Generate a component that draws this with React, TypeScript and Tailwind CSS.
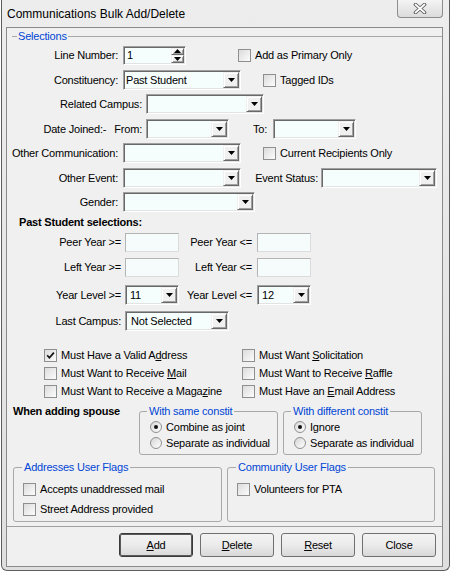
import React from "react";

const sunken =
  "border border-t-[#a0a0a0] border-l-[#a0a0a0] border-b-white border-r-white shadow-[inset_1px_1px_0_#696969,inset_-1px_-1px_0_#e3e3e3]";
const raised =
  "border border-t-[#f0f0f0] border-l-[#f0f0f0] border-b-[#696969] border-r-[#696969] shadow-[inset_1px_1px_0_#ffffff,inset_-1px_-1px_0_#a0a0a0] bg-[#f0f0f0]";

function DropButton() {
  return (
    <div className={`w-[16px] h-full shrink-0 flex items-center justify-center ${raised}`}>
      <svg width="7" height="4" viewBox="0 0 7 4">
        <polygon points="0,0 7,0 3.5,4" fill="#000" />
      </svg>
    </div>
  );
}

function Combo({ className, value, pad = "pl-[1px]" }: { className: string; value?: string; pad?: string }) {
  return (
    <div className={`flex h-[20px] p-[1px] bg-[#f5fdfd] shrink-0 ${sunken} ${className}`}>
      <div className={`flex-1 flex items-center overflow-hidden whitespace-nowrap ${pad}`}>{value}</div>
      <DropButton />
    </div>
  );
}

function TextBox({ className }: { className: string }) {
  return (
    <div
      className={`h-[19px] shrink-0 bg-[#f6fcfc] border border-[#b4b4b4] border-b-[#dcdcdc] border-r-[#dcdcdc] ${className}`}
    />
  );
}

function Spin() {
  return (
    <div className={`ml-[5px] w-[63px] h-[19px] flex p-[1px] bg-[#f5fdfd] shrink-0 ${sunken}`}>
      <div className="flex-1 flex items-center pl-[2px]">1</div>
      <div className="w-[13px] flex flex-col">
        <div className={`flex-1 flex items-center justify-center ${raised}`}>
          <svg width="7" height="4" viewBox="0 0 7 4">
            <polygon points="0,4 7,4 3.5,0" fill="#000" />
          </svg>
        </div>
        <div className={`flex-1 flex items-center justify-center ${raised}`}>
          <svg width="7" height="4" viewBox="0 0 7 4">
            <polygon points="0,0 7,0 3.5,4" fill="#000" />
          </svg>
        </div>
      </div>
    </div>
  );
}

function Box({ checked }: { checked?: boolean }) {
  return (
    <span className="w-[13px] h-[13px] shrink-0 border border-[#8e8f8f] bg-linear-to-br from-[#dcdcdc] to-[#fcfcfc] flex items-center justify-center">
      {checked && (
        <svg width="9" height="9" viewBox="0 0 9 9">
          <path d="M1.2 4.3 L3.4 6.8 L7.9 1.6" fill="none" stroke="#111" strokeWidth="1.7" />
        </svg>
      )}
    </span>
  );
}

function CheckItem({ checked, className = "", children }: { checked?: boolean; className?: string; children: React.ReactNode }) {
  return (
    <div className={`flex items-center gap-[4px] whitespace-nowrap ${className}`}>
      <Box checked={checked} />
      <span>{children}</span>
    </div>
  );
}

function Radio({ on, children }: { on?: boolean; children: React.ReactNode }) {
  return (
    <div className="h-[16px] flex items-center gap-[4px] whitespace-nowrap">
      <span className="w-[12px] h-[12px] shrink-0 rounded-full border border-[#8e8f8f] bg-linear-to-br from-[#d6d6d6] to-white flex items-center justify-center">
        {on && <span className="w-[4px] h-[4px] rounded-full bg-[#111]" />}
      </span>
      <span>{children}</span>
    </div>
  );
}

function Label({ className, children }: { className: string; children: React.ReactNode }) {
  return <span className={`shrink-0 text-right whitespace-nowrap ${className}`}>{children}</span>;
}

function Button({ def, children }: { def?: boolean; children: React.ReactNode }) {
  return (
    <button
      className={`w-[74px] h-[24px] rounded-[3px] border bg-linear-to-b from-[#f3f3f3] via-[#ebebeb] to-[#d8d8d8] text-[11px] ${
        def ? "border-[#3a3a3a] shadow-[inset_0_0_0_1px_#5a5a5a]" : "border-[#707070]"
      }`}
    >
      {children}
    </button>
  );
}

export default function App() {
  return (
    <div className="w-[451px] h-[571px] bg-white font-['Liberation_Sans',Arial,sans-serif] text-[11px] tracking-[-0.2px] text-black leading-none">
      <div className="ml-[1px] w-[449px] h-[571px] flex flex-col border-x border-b border-[#5d5d5d] rounded-b-[6px] bg-linear-to-b from-[#ededed] to-[#dfdfdf]">
        {/* title bar */}
        <div className="h-[27px] shrink-0 flex pl-[5px] pr-[6px]">
          <span className="self-center text-[12px] tracking-normal">Communications Bulk Add/Delete</span>
          <div className="ml-auto w-[46px] h-[18px] rounded-b-[4px] border border-t-0 border-[#8d8d8d] bg-linear-to-b from-[#f4f4f4] to-[#dcdcdc] flex items-center justify-center">
            <svg width="14" height="11" viewBox="0 0 14 11">
              <path d="M2.5 1.5 L11.5 9.5 M11.5 1.5 L2.5 9.5" stroke="#5a5a5a" strokeWidth="3.6" strokeLinecap="round" />
              <path d="M2.5 1.5 L11.5 9.5 M11.5 1.5 L2.5 9.5" stroke="#ffffff" strokeWidth="1.7" strokeLinecap="round" />
            </svg>
          </div>
        </div>

        {/* client */}
        <div className="ml-[4px] mr-[6px] h-[540px] flex flex-col border border-[#8a8a8a] bg-[#f0f0f0]">
          <div className="h-[499px] shrink-0 flex flex-col border-b border-[#a0a0a0]">
            <div className="mt-[2px] h-[12px] flex items-center">
              <div className="ml-[5px] w-[5px] h-px bg-[#a8a8a8]" />
              <span className="px-[1px] text-[#0046d5] leading-[12px]">Selections</span>
              <div className="flex-1 h-px bg-[#a8a8a8]" />
            </div>

            <div className="mt-[3px] h-[20px] flex items-center">
              <Label className="w-[111px]">Line Number:</Label>
              <Spin />
              <CheckItem className="ml-[52px]">Add as Primary Only</CheckItem>
            </div>

            <div className="mt-[5px] h-[20px] flex items-center">
              <Label className="w-[111px]">Constituency:</Label>
              <Combo className="ml-[5px] w-[118px]" value="Past Student" />
              <CheckItem className="ml-[22px]">Tagged IDs</CheckItem>
            </div>

            <div className="mt-[4px] h-[20px] flex items-center">
              <Label className="w-[135px]">Related Campus:</Label>
              <Combo className="ml-[4px] w-[118px]" />
            </div>

            <div className="mt-[5px] h-[20px] flex items-center">
              <Label className="w-[135px] flex justify-end gap-[8px]">
                <span>Date Joined:-</span>
                <span>From:</span>
              </Label>
              <Combo className="ml-[4px] w-[83px]" />
              <Label className="w-[38px]">To:</Label>
              <Combo className="ml-[6px] w-[83px]" />
            </div>

            <div className="mt-[4px] h-[20px] flex items-center">
              <Label className="w-[111px]">Other Communication:</Label>
              <Combo className="ml-[5px] w-[118px]" />
              <CheckItem className="ml-[22px]">Current Recipients Only</CheckItem>
            </div>

            <div className="mt-[5px] h-[20px] flex items-center">
              <Label className="w-[111px]">Other Event:</Label>
              <Combo className="ml-[5px] w-[118px]" />
              <Label className="w-[77px]">Event Status:</Label>
              <Combo className="ml-[3px] w-[116px]" />
            </div>

            <div className="mt-[4px] h-[20px] flex items-center">
              <Label className="w-[111px]">Gender:</Label>
              <Combo className="ml-[5px] w-[132px]" />
            </div>

            <div className="mt-[3px] h-[14px] flex items-center pl-[12px] font-bold">Past Student selections:</div>

            <div className="mt-[4px] h-[19px] flex items-center">
              <Label className="w-[114px]">Peer Year &gt;=</Label>
              <TextBox className="ml-[4px] w-[54px]" />
              <Label className="w-[73px]">Peer Year &lt;=</Label>
              <TextBox className="ml-[5px] w-[54px]" />
            </div>

            <div className="mt-[6px] h-[19px] flex items-center">
              <Label className="w-[114px]">Left Year &gt;=</Label>
              <TextBox className="ml-[4px] w-[54px]" />
              <Label className="w-[73px]">Left Year &lt;=</Label>
              <TextBox className="ml-[5px] w-[54px]" />
            </div>

            <div className="mt-[8px] h-[20px] flex items-center">
              <Label className="w-[114px]">Year Level &gt;=</Label>
              <Combo className="ml-[4px] w-[54px]" value="11" pad="pl-[3px]" />
              <Label className="w-[73px]">Year Level &lt;=</Label>
              <Combo className="ml-[5px] w-[54px]" value="12" pad="pl-[3px]" />
            </div>

            <div className="mt-[6px] h-[20px] flex items-center">
              <Label className="w-[114px]">Last Campus:</Label>
              <Combo className="ml-[4px] w-[104px]" value="Not Selected" pad="pl-[4px]" />
            </div>

            <div className="mt-[15px] ml-[37px] grid grid-cols-[198px_auto] auto-rows-[18px] items-center">
              <CheckItem checked>
                Must Have a Valid A<u>d</u>dress
              </CheckItem>
              <CheckItem>
                Must Want <u>S</u>olicitation
              </CheckItem>
              <CheckItem>
                Must Want to Receive <u>M</u>ail
              </CheckItem>
              <CheckItem>
                Must Want to Receive <u>R</u>affle
              </CheckItem>
              <CheckItem>
                Must Want to Receive a Maga<u>z</u>ine
              </CheckItem>
              <CheckItem>
                Must Have an <u>E</u>mail Address
              </CheckItem>
            </div>

            <div className="mt-[4px] h-[51px] flex">
              <span className="ml-[6px] w-[126px] pt-[1px] leading-[13px] font-bold whitespace-nowrap">When adding spouse</span>
              <fieldset className="w-[139px] h-[51px] border border-[#a8a8a8] rounded-[3px] pl-[10px]">
                <legend className="ml-[-3px] px-[2px] text-[#0046d5] leading-[14px]">With same constit</legend>
                <div className="mt-[1px]">
                  <Radio on>Combine as joint</Radio>
                  <Radio>Separate as individual</Radio>
                </div>
              </fieldset>
              <fieldset className="ml-[5px] w-[139px] h-[51px] border border-[#a8a8a8] rounded-[3px] pl-[10px]">
                <legend className="ml-[-3px] px-[2px] text-[#0046d5] leading-[14px]">With different constit</legend>
                <div className="mt-[1px]">
                  <Radio on>Ignore</Radio>
                  <Radio>Separate as individual</Radio>
                </div>
              </fieldset>
            </div>

            <div className="mt-[6px] h-[61px] flex">
              <fieldset className="ml-[6px] w-[209px] h-[61px] border border-[#a8a8a8] rounded-[3px] pl-[9px]">
                <legend className="ml-[-1px] px-[2px] text-[#0046d5] leading-[13px]">Addresses User Flags</legend>
                <div className="mt-[5px] flex flex-col">
                  <CheckItem className="h-[20px]">Accepts unaddressed mail</CheckItem>
                  <CheckItem className="h-[20px]">Street Address provided</CheckItem>
                </div>
              </fieldset>
              <fieldset className="ml-[5px] w-[208px] h-[61px] border border-[#a8a8a8] rounded-[3px] pl-[9px]">
                <legend className="ml-[-1px] px-[2px] text-[#0046d5] leading-[13px]">Community User Flags</legend>
                <div className="mt-[5px] flex flex-col">
                  <CheckItem className="h-[20px]">Volunteers for PTA</CheckItem>
                </div>
              </fieldset>
            </div>
          </div>

          <div className="flex-1 pt-[6px] pl-[112px] flex gap-[7px] items-start">
            <Button def>
              <u>A</u>dd
            </Button>
            <Button>
              <u>D</u>elete
            </Button>
            <Button>
              <u>R</u>eset
            </Button>
            <Button>Close</Button>
          </div>
        </div>
      </div>
    </div>
  );
}
